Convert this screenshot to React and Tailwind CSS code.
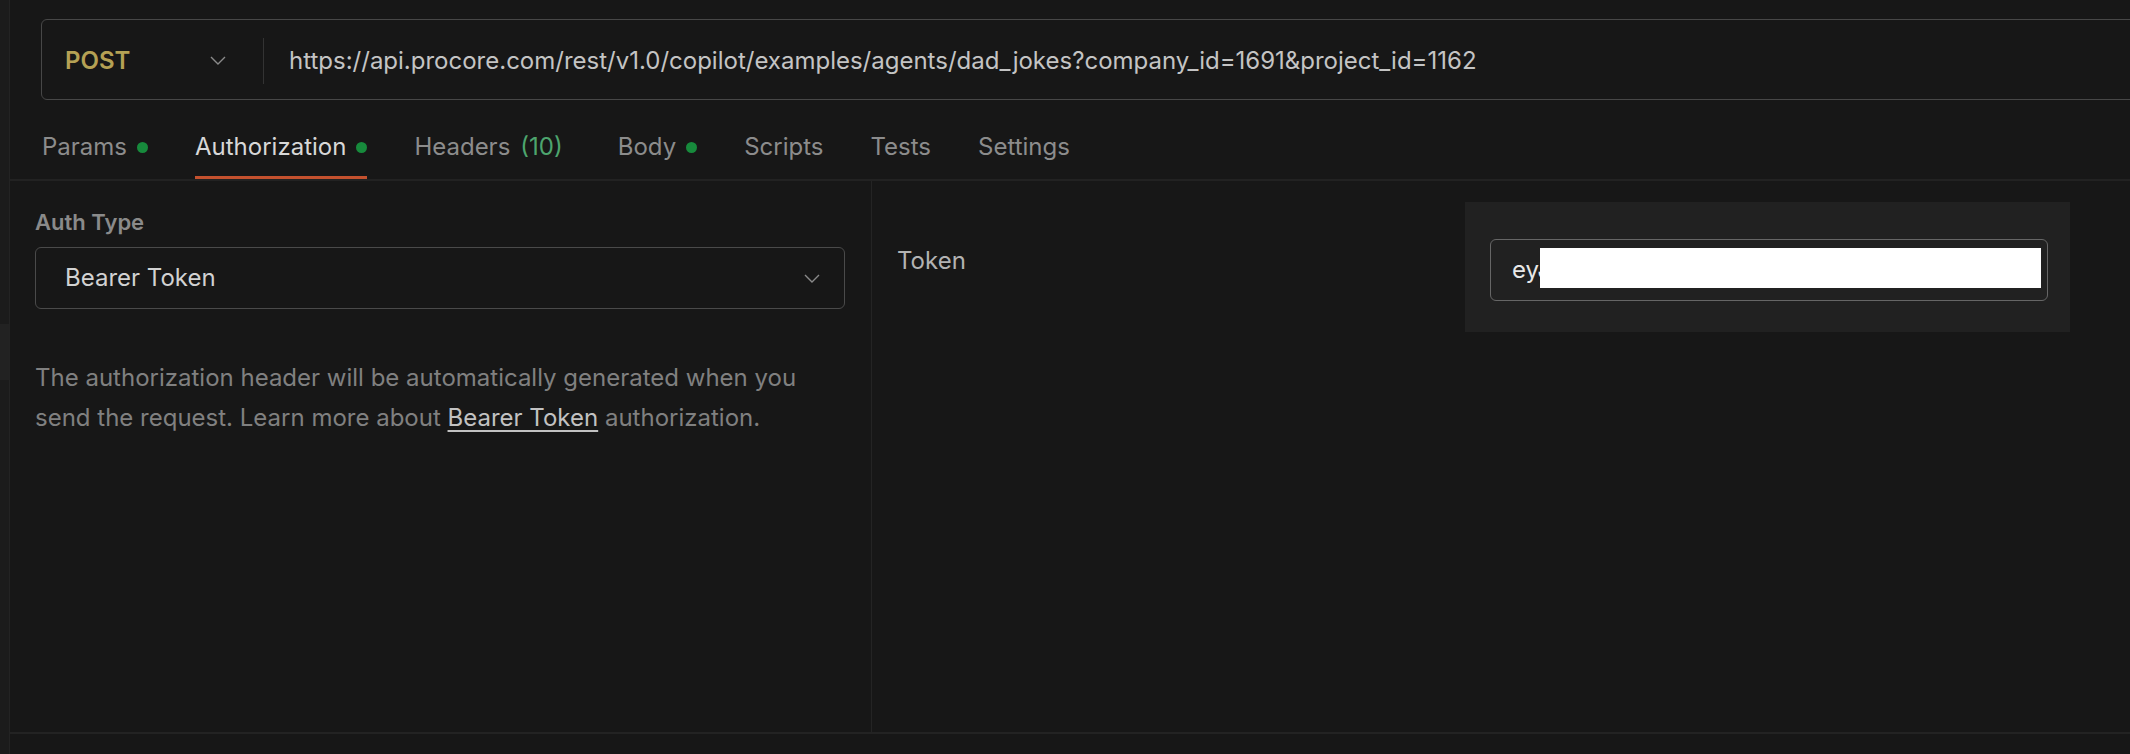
function Chevron({ className }) {
  return (
    <svg viewBox="0 0 16 9" className={className} fill="none" stroke="currentColor" strokeWidth="1.4">
      <polyline points="1,1 8,8 15,1" />
    </svg>
  );
}

function Dot() {
  return <span className="ml-[10px] inline-block h-[11px] w-[11px] rounded-full bg-[#178a3c]" />;
}

function Tab({ label, active, dot, extra, className = '' }) {
  return (
    <div
      className={`flex h-full items-center border-b-[3px] pt-[18px] ${
        active ? 'border-[#c4512e] text-[#d8d8d8]' : 'border-transparent text-[#8c8c8c]'
      } ${className}`}
    >
      <span>{label}</span>
      {extra && <span className="ml-[10px] text-[#4da56e]">{extra}</span>}
      {dot && <Dot />}
    </div>
  );
}

export default function App() {
  return (
    <div className="flex h-[754px] w-full overflow-hidden bg-[#171717] font-['Inter','Noto_Sans',sans-serif] text-[24px]">
      {/* left rail */}
      <div className="flex w-[10px] shrink-0 flex-col border-r border-[#232323] bg-[#1b1b1b]">
        <div className="h-[324px]" />
        <div className="h-[56px] bg-[#222222]" />
      </div>

      <div className="flex min-w-0 flex-1 flex-col">
        {/* request url bar */}
        <div className="pl-[31px] pt-[19px]">
          <div className="flex h-[81px] w-[calc(100%+20px)] items-center rounded-md border border-[#474747] pt-[2px]">
            <div className="flex w-[221px] shrink-0 items-center justify-between pl-[23px] pr-[37px]">
              <span className="font-semibold text-[#b5a154]">POST</span>
              <Chevron className="h-[9px] w-[16px] text-[#8a8a8a]" />
            </div>
            <div className="h-[46px] w-px bg-[#333333]" />
            <div className="whitespace-nowrap pl-[25px] text-[#c4c4c4]">
              https://api.procore.com/rest/v1.0/copilot/examples/agents/dad_jokes?company_id=1691&amp;project_id=1162
            </div>
          </div>
        </div>

        {/* tabs */}
        <div className="flex h-[81px] items-stretch gap-[47px] border-b-2 border-[#222222] pl-[32px]">
          <Tab label="Params" dot />
          <Tab label="Authorization" dot active />
          <Tab label="Headers" extra="(10)" className="pr-[8px]" />
          <Tab label="Body" dot />
          <Tab label="Scripts" />
          <Tab label="Tests" />
          <Tab label="Settings" />
        </div>

        {/* content */}
        <div className="flex flex-1">
          <div className="w-[862px] shrink-0 border-r border-[#242424] pl-[25px] pr-[26px] pt-[26px]">
            <div className="text-[22px] font-semibold leading-[30px] text-[#8a8a8a]">Auth Type</div>
            <div className="mt-[10px] flex h-[62px] items-center justify-between rounded-md border border-[#4a4a4a] pl-[29px] pr-[24px]">
              <span className="text-[#d2d2d2]">Bearer Token</span>
              <Chevron className="h-[9px] w-[16px] text-[#8a8a8a]" />
            </div>
            <p className="mt-[49px] leading-[40px] text-[#808080]">
              The authorization header will be automatically generated when you
              <br />
              send the request. Learn more about{' '}
              <span className="text-[#c2c2c2] underline underline-offset-4">Bearer Token</span> authorization.
            </p>
          </div>

          <div className="flex flex-1 items-start pl-[25px] pr-[60px] pt-[21px]">
            <div className="mt-[44px] flex-1 leading-[30px] text-[#b3b3b3]">Token</div>
            <div className="w-[605px] bg-[#212121] pb-[31px] pl-[25px] pr-[22px] pt-[37px]">
              <div className="relative flex h-[62px] items-center rounded-md border border-[#666666] pl-[21px] text-[#e8e8e8]">
                <span>eyJ</span>
                <span className="absolute left-[49px] right-[6px] top-[8px] h-[40px] bg-white" />
              </div>
            </div>
          </div>
        </div>

        {/* bottom strip */}
        <div className="h-[22px] border-t-2 border-[#232323]" />
      </div>
    </div>
  );
}
